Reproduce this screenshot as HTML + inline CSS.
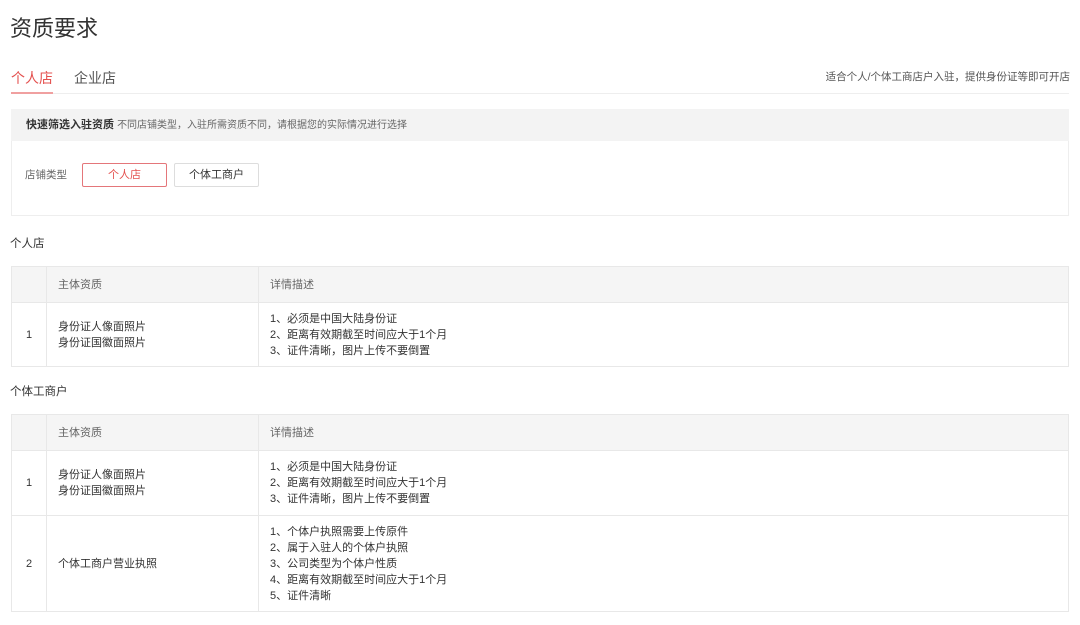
<!DOCTYPE html>
<html><head><meta charset="utf-8"><style>
*{margin:0;padding:0;box-sizing:border-box}
body{width:1080px;height:625px;background:#fff;font-family:"Liberation Sans","Noto Sans CJK SC",sans-serif;color:#333;position:relative;overflow:hidden}
.a{position:absolute}
.t{font-size:11px;line-height:16px;color:#333}
table{position:absolute;left:11px;width:1058px;border-collapse:collapse;font-size:11px;color:#333}
td{border:1px solid #e8e8e8;line-height:16px;vertical-align:middle}
tr.h td{background:#f5f5f5;color:#666;height:36px}
td.n{width:35px;text-align:center}
td.m{width:212px;padding-left:11px}
td.d{padding-left:11px}
</style></head><body>
<div class="a" style="left:10px;top:14px;font-size:22px;line-height:30px;color:#333">资质要求</div>
<div class="a" style="left:11px;top:68px;font-size:14px;line-height:20px;color:#e4514f">个人店</div>
<div class="a" style="left:74px;top:68px;font-size:14px;line-height:20px;color:#555">企业店</div>
<div class="a" style="left:11px;top:93px;width:1058px;height:1px;background:#eee"></div>
<div class="a" style="left:11px;top:92px;width:42px;height:2px;background:#f0a0a0"></div>
<div class="a t" style="right:10px;top:69px;font-size:10.5px;color:#555">适合个人/个体工商店户入驻，提供身份证等即可开店</div>
<div class="a" style="left:11px;top:109px;width:1058px;height:107px;border:1px solid #eee"></div>
<div class="a" style="left:11px;top:109px;width:1058px;height:32px;background:#f3f3f3"></div>
<div class="a t" style="left:26px;top:117px"><b style="font-weight:bold;color:#333">快速筛选入驻资质</b> <span style="font-size:10px;color:#666">不同店铺类型，入驻所需资质不同，请根据您的实际情况进行选择</span></div>
<div class="a t" style="left:25px;top:167px;color:#666;font-size:10.5px">店铺类型</div>
<div class="a t" style="left:82px;top:163px;width:85px;height:24px;border:1px solid #e4767a;border-radius:2px;color:#e4514f;text-align:center;line-height:22px">个人店</div>
<div class="a t" style="left:174px;top:163px;width:85px;height:24px;border:1px solid #ddd;border-radius:2px;text-align:center;line-height:22px">个体工商户</div>
<div class="a t" style="left:10px;top:236px;font-size:11.5px">个人店</div>
<table style="top:266px">
<tr class="h"><td class="n"></td><td class="m">主体资质</td><td class="d">详情描述</td></tr>
<tr style="height:64px"><td class="n">1</td><td class="m">身份证人像面照片<br>身份证国徽面照片</td><td class="d">1、必须是中国大陆身份证<br>2、距离有效期截至时间应大于1个月<br>3、证件清晰，图片上传不要倒置</td></tr>
</table>
<div class="a t" style="left:10px;top:384px;font-size:11.5px">个体工商户</div>
<table style="top:414px">
<tr class="h"><td class="n"></td><td class="m">主体资质</td><td class="d">详情描述</td></tr>
<tr style="height:65px"><td class="n">1</td><td class="m">身份证人像面照片<br>身份证国徽面照片</td><td class="d">1、必须是中国大陆身份证<br>2、距离有效期截至时间应大于1个月<br>3、证件清晰，图片上传不要倒置</td></tr>
<tr style="height:96px"><td class="n">2</td><td class="m">个体工商户营业执照</td><td class="d">1、个体户执照需要上传原件<br>2、属于入驻人的个体户执照<br>3、公司类型为个体户性质<br>4、距离有效期截至时间应大于1个月<br>5、证件清晰</td></tr>
</table>
</body></html>
